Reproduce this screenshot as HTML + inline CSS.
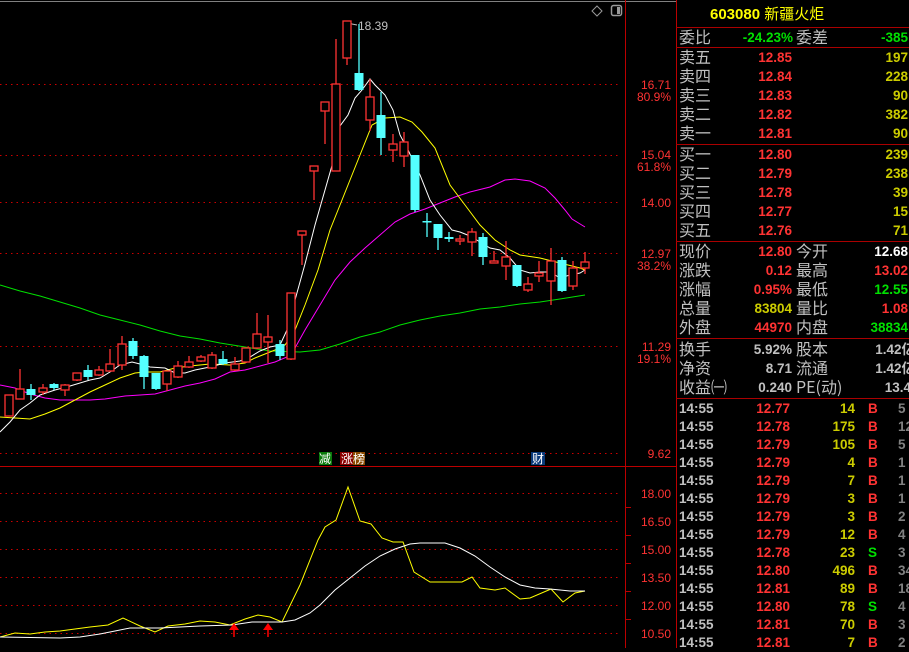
<!DOCTYPE html>
<html><head><meta charset="utf-8"><style>
*{margin:0;padding:0}
body{width:909px;height:648px;background:#000;overflow:hidden;position:relative;font-family:"Liberation Sans","Noto Sans CJK SC",sans-serif}
svg{position:absolute;left:0;top:0}
.p{position:absolute;left:676px;top:0;width:233px;height:648px;font-size:14px}
.r{position:absolute;height:19px;line-height:19px;white-space:nowrap}
.l{position:absolute;left:3px;top:-1px;color:#c0c0c0;font-family:"Noto Sans CJK SC",sans-serif;font-size:16px}
.l2{position:absolute;left:120px;top:-1px;color:#c0c0c0;font-family:"Noto Sans CJK SC",sans-serif;font-size:16px}
.v{position:absolute;text-align:right;font-weight:bold;font-size:13.5px}
.ln{position:absolute;left:0;width:233px;height:1px;background:#a00}
.R{color:#ff3333}.Y{color:#cccc00}.G{color:#00e000}.W{color:#fff}.S{color:#c0c0c0}.D{color:#808080}
</style></head><body>
<svg width="909" height="648" viewBox="0 0 909 648">
<line x1="0" y1="1.5" x2="676" y2="1.5" stroke="#808080"/>
<g stroke="#c00" stroke-dasharray="1.5,4" stroke-width="1">
<line x1="0" y1="84.5" x2="620" y2="84.5"/><line x1="0" y1="155.5" x2="620" y2="155.5"/><line x1="0" y1="202.5" x2="620" y2="202.5"/><line x1="0" y1="253.5" x2="620" y2="253.5"/><line x1="0" y1="346.5" x2="620" y2="346.5"/><line x1="0" y1="453.5" x2="620" y2="453.5"/>
<line x1="0" y1="493.5" x2="620" y2="493.5"/><line x1="0" y1="521.5" x2="620" y2="521.5"/><line x1="0" y1="549.5" x2="620" y2="549.5"/><line x1="0" y1="577.5" x2="620" y2="577.5"/><line x1="0" y1="605.5" x2="620" y2="605.5"/><line x1="0" y1="633.5" x2="620" y2="633.5"/>
</g>
<line x1="625.5" y1="0" x2="625.5" y2="648" stroke="#b00"/>
<line x1="676.5" y1="0" x2="676.5" y2="648" stroke="#b00"/>
<line x1="0" y1="466.5" x2="676" y2="466.5" stroke="#b00"/>
<g font-size="12" fill="#ff3333" text-anchor="end" font-family="Liberation Sans">
<text x="671" y="89">16.71</text><text x="671" y="101">80.9%</text>
<text x="671" y="159">15.04</text><text x="671" y="171">61.8%</text>
<text x="671" y="207">14.00</text>
<text x="671" y="258">12.97</text><text x="671" y="270">38.2%</text>
<text x="671" y="351">11.29</text><text x="671" y="363">19.1%</text>
<text x="671" y="458">9.62</text>
<text x="671" y="498">18.00</text><text x="671" y="526">16.50</text><text x="671" y="554">15.00</text><text x="671" y="582">13.50</text><text x="671" y="610">12.00</text><text x="671" y="638">10.50</text>
</g>
<g stroke="#b00"><line x1="626" y1="507.5" x2="631" y2="507.5"/><line x1="626" y1="535.5" x2="631" y2="535.5"/><line x1="626" y1="563.5" x2="631" y2="563.5"/><line x1="626" y1="591.5" x2="631" y2="591.5"/><line x1="626" y1="619.5" x2="631" y2="619.5"/></g>
<text x="358" y="30" fill="#c0c0c0" font-size="12" font-family="Liberation Sans">18.39</text>
<polyline points="347,22 352,24 357,25" fill="none" stroke="#c0c0c0"/>
<path d="M597,6 L602,11 L597,16 L592,11Z" fill="none" stroke="#999"/>
<rect x="611.5" y="5.5" width="10" height="10" rx="2" fill="none" stroke="#999" stroke-width="1.5"/><rect x="617" y="7" width="3" height="7" fill="#999"/>
<g fill="none" stroke-width="1">
<polyline stroke="#00e000" points="0,285 20,291 40,296 60,302 80,308 100,315 120,320 140,325 160,331 180,336 200,339 220,343 245,347 270,351 300,352 320,350 340,344 360,337 380,332 400,325 420,320 440,316 460,313 480,309 500,307 520,304 540,302 560,299 585,295"/>
<polyline stroke="#ff00ff" points="0,385 15,388 30,394 45,398 60,400 75,400 90,400 105,399 125,396 140,395 155,394 170,390 185,386 200,383 215,379 230,372 245,370 260,366 275,362 287,357 295,348 305,330 320,305 335,280 350,262 365,248 380,235 395,222 410,214 425,209 440,203 455,197 470,192 490,187 505,180 515,179 530,181 545,188 555,198 565,210 572,219 585,227"/>
<polyline stroke="#ffff00" points="0,417 15,418 30,419 45,414 60,408 75,400 90,392 105,385 120,378 135,373 145,372 160,372 175,368 190,366 210,364 230,365 245,363 255,358 265,354 275,350 285,345 295,330 305,305 318,270 330,230 340,205 350,180 360,155 372,125 385,118 400,117 412,122 422,132 435,148 450,185 465,205 480,225 495,240 510,250 520,255 540,258 560,263 580,268 585,270"/>
<polyline stroke="#fff" points="0,432 10,422 20,410 30,403 40,395 55,390 70,386 90,380 100,378 110,372 120,365 132,362 140,364 150,367 165,368 175,373 185,373 195,370 210,367 225,363 240,361 250,357 260,351 270,347 280,345 287,330 295,300 305,264 315,225 325,190 335,155 340,126 348,115 355,98 362,90 370,79 375,85 385,95 393,110 400,135 408,150 420,175 430,200 440,215 452,230 460,232 470,236 480,242 490,248 500,250 510,258 520,270 530,273 540,272 550,272 560,278 570,275 580,273 585,270"/>
</g>
<g id="c" stroke-width="1.3"></g>
<polyline fill="none" stroke="#ffff00" points="0,637 15,633 30,634 45,632 60,631 75,629 90,627 108,625 123,618 140,626 155,632 168,626 185,624 200,621 215,622 230,625 245,619 258,615 270,617 282,622 300,585 318,540 325,527 336,520 348,487 360,521 371,524 382,538 393,542 403,542 414,572 430,582 445,582 462,582 472,577 480,588 495,590 505,588 520,599 530,598 551,589 563,602 575,593 585,591"/>
<polyline fill="none" stroke="#fff" points="0,637 60,638 80,637 100,634 115,631 130,628 160,628 200,626 232,625 252,622 282,622 295,620 310,613 320,605 335,590 350,578 365,566 380,556 395,549 410,544 420,543 445,543 460,548 475,556 490,567 505,577 520,585 535,588 550,589 570,591 585,591"/>
<g fill="#f00" stroke="#f00" stroke-width="1.5"><path d="M234,637V628" /><path d="M229,630L234,623L239,630Z" stroke="none"/><path d="M268,637V628"/><path d="M263,630L268,623L273,630Z" stroke="none"/></g>
<rect x="319" y="452" width="13" height="13" fill="#0a7a0a"/><rect x="340" y="452" width="13" height="13" fill="#8b0000"/><rect x="353" y="452" width="12" height="13" fill="#8b4a00"/><rect x="531" y="452" width="14" height="13" fill="#0a3a7a"/>
<g font-size="12" fill="#fff" font-family="Noto Sans CJK SC"><text x="319" y="463">减</text><text x="341" y="463">涨</text><text x="353" y="463">榜</text><text x="532" y="463">财</text></g>
</svg>
<script>
var d=[
[9,395,416,395,416,'r'],[20,389,399,369,399,'r'],[31,389,395,384,400,'c'],[43,388,392,384,395,'r'],[54,384,388,383,390,'c'],[65,385,390,384,396,'r'],[77,373,380,373,381,'r'],[88,370,377,365,380,'c'],[99,370,375,366,376,'r'],[110,364,371,349,372,'r'],[122,344,365,336,370,'r'],[133,341,356,338,359,'c'],[144,356,377,355,389,'c'],[156,373,389,373,390,'c'],[167,371,384,371,391,'r'],[178,366,377,361,378,'r'],[189,362,367,356,368,'r'],[201,357,361,355,362,'r'],[212,355,368,352,369,'r'],[223,359,364,351,365,'c'],[235,364,370,357,371,'r'],[246,348,362,348,363,'r'],[257,334,348,313,349,'r'],[268,337,342,315,363,'r'],[280,344,356,340,360,'c'],[291,293,359,293,360,'r'],[302,231,235,231,265,'r'],[314,166,171,166,200,'r'],[325,102,111,102,144,'r'],[336,84,171,39,171,'r'],[347,21,58,21,65,'r'],[359,73,90,24,91,'c'],[370,97,120,79,131,'r'],[381,115,138,92,155,'c'],[393,144,150,134,162,'r'],[404,142,156,132,167,'r'],[415,155,210,155,212,'c'],[427,221,222,213,237,'c'],[438,224,238,224,250,'c'],[449,237,239,232,242,'c'],[460,239,241,235,245,'r'],[472,232,242,228,256,'r'],[483,237,257,233,265,'c'],[494,261,263,251,263,'r'],[506,257,266,241,280,'r'],[517,265,286,265,287,'c'],[528,284,290,277,292,'r'],[539,273,276,261,282,'r'],[551,261,281,248,305,'r'],[562,260,291,257,292,'c'],[573,268,286,261,290,'r'],[585,262,268,252,274,'r']];
var s='';d.forEach(function(a){var x=a[0],t=a[1],b=a[2],h=a[3],l=a[4];
if(a[5]=='r'){s+='<line x1="'+x+'" y1="'+h+'" x2="'+x+'" y2="'+t+'" stroke="#ff3333"/><line x1="'+x+'" y1="'+b+'" x2="'+x+'" y2="'+l+'" stroke="#ff3333"/><rect x="'+(x-4)+'" y="'+t+'" width="8" height="'+Math.max(1,b-t)+'" fill="#000" stroke="#ff3333"/>';}
else{s+='<line x1="'+x+'" y1="'+h+'" x2="'+x+'" y2="'+l+'" stroke="#54ffff"/><rect x="'+(x-4.5)+'" y="'+t+'" width="9" height="'+Math.max(1.5,b-t)+'" fill="#54ffff"/>';}});
document.getElementById('c').innerHTML=s;
</script>
<div class="p">
<div class="r" style="top:4px;left:34px;font-size:15px;color:#ffff00;font-weight:bold">603080 <span style="font-weight:normal;font-family:'Noto Sans CJK SC'">新疆火炬</span></div>
<div class="ln" style="top:27px"></div>
<div class="r" style="top:28px;width:233px"><span class="l">委比</span><span class="v G" style="right:116px">-24.23%</span><span class="l2">委差</span><span class="v G" style="right:1px">-385</span></div>
<div class="ln" style="top:47px"></div>
<div class="r" style="top:48px;width:233px"><span class="l">卖五</span><span class="v R" style="right:117px">12.85</span><span class="v Y" style="right:1px">197</span></div>
<div class="r" style="top:67px;width:233px"><span class="l">卖四</span><span class="v R" style="right:117px">12.84</span><span class="v Y" style="right:1px">228</span></div>
<div class="r" style="top:86px;width:233px"><span class="l">卖三</span><span class="v R" style="right:117px">12.83</span><span class="v Y" style="right:1px">90</span></div>
<div class="r" style="top:105px;width:233px"><span class="l">卖二</span><span class="v R" style="right:117px">12.82</span><span class="v Y" style="right:1px">382</span></div>
<div class="r" style="top:124px;width:233px"><span class="l">卖一</span><span class="v R" style="right:117px">12.81</span><span class="v Y" style="right:1px">90</span></div>
<div class="ln" style="top:144px"></div>
<div class="r" style="top:145px;width:233px"><span class="l">买一</span><span class="v R" style="right:117px">12.80</span><span class="v Y" style="right:1px">239</span></div>
<div class="r" style="top:164px;width:233px"><span class="l">买二</span><span class="v R" style="right:117px">12.79</span><span class="v Y" style="right:1px">238</span></div>
<div class="r" style="top:183px;width:233px"><span class="l">买三</span><span class="v R" style="right:117px">12.78</span><span class="v Y" style="right:1px">39</span></div>
<div class="r" style="top:202px;width:233px"><span class="l">买四</span><span class="v R" style="right:117px">12.77</span><span class="v Y" style="right:1px">15</span></div>
<div class="r" style="top:221px;width:233px"><span class="l">买五</span><span class="v R" style="right:117px">12.76</span><span class="v Y" style="right:1px">71</span></div>
<div class="ln" style="top:241px"></div>
<div class="r" style="top:242px;width:233px"><span class="l">现价</span><span class="v R" style="right:117px">12.80</span><span class="l2">今开</span><span class="v W" style="right:1px">12.68</span></div>
<div class="r" style="top:261px;width:233px"><span class="l">涨跌</span><span class="v R" style="right:117px">0.12</span><span class="l2">最高</span><span class="v R" style="right:1px">13.02</span></div>
<div class="r" style="top:280px;width:233px"><span class="l">涨幅</span><span class="v R" style="right:117px">0.95%</span><span class="l2">最低</span><span class="v G" style="right:1px">12.55</span></div>
<div class="r" style="top:299px;width:233px"><span class="l">总量</span><span class="v Y" style="right:117px">83804</span><span class="l2">量比</span><span class="v R" style="right:1px">1.08</span></div>
<div class="r" style="top:318px;width:233px"><span class="l">外盘</span><span class="v R" style="right:117px">44970</span><span class="l2">内盘</span><span class="v G" style="right:1px">38834</span></div>
<div class="ln" style="top:338px"></div>
<div class="r" style="top:340px;width:233px"><span class="l">换手</span><span class="v S" style="right:117px">5.92%</span><span class="l2">股本</span><span class="v S" style="right:-6px">1.42亿</span></div>
<div class="r" style="top:359px;width:233px"><span class="l">净资</span><span class="v S" style="right:117px">8.71</span><span class="l2">流通</span><span class="v S" style="right:-6px">1.42亿</span></div>
<div class="r" style="top:378px;width:233px"><span class="l">收益㈠</span><span class="v S" style="right:117px">0.240</span><span class="l2">PE(动)</span><span class="v S" style="right:-2px">13.4</span></div>
<div class="ln" style="top:398px"></div>
<div id="t"></div>
</div>
<script>
var tr=[['12.77','14','B','5'],['12.78','175','B','12'],['12.79','105','B','5'],['12.79','4','B','1'],['12.79','7','B','1'],['12.79','3','B','1'],['12.79','3','B','2'],['12.79','12','B','4'],['12.78','23','S','3'],['12.80','496','B','34'],['12.81','89','B','18'],['12.80','78','S','4'],['12.81','70','B','3'],['12.81','7','B','2']];
var h='';tr.forEach(function(a,i){var y=400+i*18;h+='<div class="r" style="top:'+y+'px;width:240px;height:18px;line-height:18px"><span class="v S" style="left:3px">14:55</span><span class="v R" style="right:126px">'+a[0]+'</span><span class="v Y" style="right:61px">'+a[1]+'</span><span class="v '+(a[2]=='B'?'R':'G')+'" style="left:192px">'+a[2]+'</span><span class="v D" style="left:222px;text-align:left">'+a[3]+'</span></div>';});
document.getElementById('t').innerHTML=h;
</script>
</body></html>
